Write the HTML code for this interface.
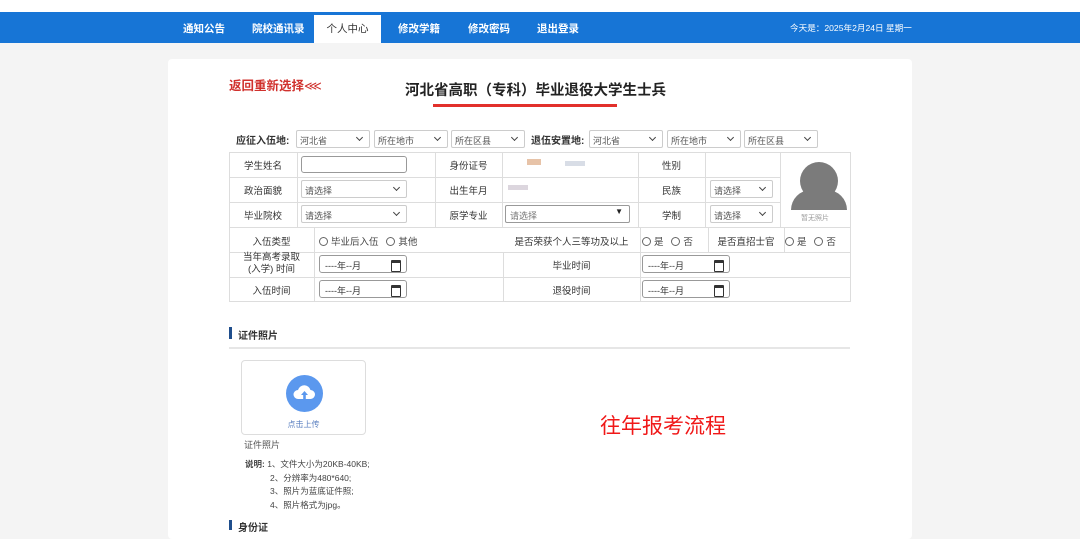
<!DOCTYPE html>
<html><head><meta charset="utf-8">
<style>
*{margin:0;padding:0;box-sizing:border-box}
body{width:1080px;height:527px;overflow:hidden;background:#f4f4f4;font-family:"Liberation Sans","Noto Sans CJK SC",sans-serif;font-size:10px;color:#333;position:relative}
.abs{position:absolute}
.top{left:0;top:0;width:1080px;height:12px;background:#fff}
.nav{left:0;top:12px;width:1080px;height:31px;background:#1775d6}
.nav span{position:absolute;top:9px;color:#fff;font-size:10.5px;font-weight:bold}
.nav .act{top:3px;height:28px;background:#fff;color:#333;font-weight:normal;width:67px;text-align:center;padding-top:6px}
.card{left:168px;top:59px;width:744px;height:480px;background:#fff;border-radius:4px}
.sel{position:absolute;height:18px;border:1px solid #ccc;border-radius:2px;background:#fff;font-size:9px;color:#555;padding:3px 0 0 3px}
.sel:after{content:"";position:absolute;right:7px;top:4px;width:4px;height:4px;border-right:1px solid #444;border-bottom:1px solid #444;transform:rotate(45deg)}
.lab{position:absolute;font-size:10px;font-weight:bold;color:#333}
.h{position:absolute;height:1px;background:#ddd}
.v{position:absolute;width:1px;background:#ddd}
.c{position:absolute;font-size:9.5px;color:#333;text-align:center}
.date{position:absolute;height:18px;border:1px solid #999;border-radius:3px;background:#fff;font-size:9px;padding:3px 0 0 5px;width:88px}
.date:after{content:"";position:absolute;right:5px;top:4px;width:8px;height:8px;border:1.5px solid #333;border-top-width:3px;border-radius:1px}
.radio{display:inline-block;width:9px;height:9px;border:1px solid #666;border-radius:50%;vertical-align:-1px;margin-right:3px}
.r{position:absolute;font-size:9.5px;color:#444}
</style></head><body>
<div class="abs top"></div>
<div class="abs nav">
<span style="left:183px">通知公告</span>
<span style="left:252px">院校通讯录</span>
<span class="act" style="left:314px">个人中心</span>
<span style="left:398px">修改学籍</span>
<span style="left:468px">修改密码</span>
<span style="left:537px">退出登录</span>
<span style="left:790px;font-weight:normal;font-size:8.6px;top:10px">今天是：2025年2月24日 星期一</span>
</div>
<div class="abs card"></div>
<div class="abs" style="left:229px;top:75px;color:#d0312d;font-size:12.5px;font-weight:bold">返回重新选择<span style="font-weight:normal">⋘</span></div>
<div class="abs" style="left:405px;top:79px;font-size:14.5px;font-weight:bold;color:#222">河北省高职（专科）毕业退役大学生士兵</div>
<div class="abs" style="left:433px;top:104px;width:184px;height:3px;background:#e2302b"></div>

<div class="lab" style="left:236px;top:132px">应征入伍地:</div>
<div class="sel" style="left:296px;top:130px;width:74px">河北省</div>
<div class="sel" style="left:374px;top:130px;width:74px">所在地市</div>
<div class="sel" style="left:451px;top:130px;width:74px">所在区县</div>
<div class="lab" style="left:531px;top:132px">退伍安置地:</div>
<div class="sel" style="left:589px;top:130px;width:74px">河北省</div>
<div class="sel" style="left:667px;top:130px;width:74px">所在地市</div>
<div class="sel" style="left:744px;top:130px;width:74px">所在区县</div>

<div class="h" style="left:229px;top:152px;width:621px"></div>
<div class="h" style="left:229px;top:177px;width:551px"></div>
<div class="h" style="left:229px;top:202px;width:551px"></div>
<div class="h" style="left:229px;top:227px;width:621px"></div>
<div class="h" style="left:229px;top:252px;width:621px"></div>
<div class="h" style="left:229px;top:277px;width:621px"></div>
<div class="h" style="left:229px;top:301px;width:621px"></div>
<div class="v" style="left:229px;top:152px;height:150px"></div>
<div class="v" style="left:850px;top:152px;height:150px"></div>
<div class="v" style="left:297px;top:152px;height:75px"></div>
<div class="v" style="left:435px;top:152px;height:75px"></div>
<div class="v" style="left:502px;top:152px;height:75px"></div>
<div class="v" style="left:638px;top:152px;height:75px"></div>
<div class="v" style="left:705px;top:152px;height:75px"></div>
<div class="v" style="left:780px;top:152px;height:75px"></div>
<div class="v" style="left:314px;top:227px;height:75px"></div>
<div class="v" style="left:503px;top:252px;height:50px"></div>
<div class="v" style="left:640px;top:227px;height:75px"></div>
<div class="v" style="left:708px;top:227px;height:25px"></div>
<div class="v" style="left:784px;top:227px;height:25px"></div>

<div class="c" style="left:229px;top:158px;width:68px">学生姓名</div>
<div class="c" style="left:229px;top:183px;width:68px">政治面貌</div>
<div class="c" style="left:229px;top:208px;width:68px">毕业院校</div>
<div class="abs" style="left:301px;top:156px;width:106px;height:17px;border:1px solid #999;border-radius:3px"></div>
<div class="sel" style="left:301px;top:180px;width:106px">请选择</div>
<div class="sel" style="left:301px;top:205px;width:106px">请选择</div>
<div class="c" style="left:435px;top:158px;width:67px">身份证号</div>
<div class="c" style="left:435px;top:183px;width:67px">出生年月</div>
<div class="c" style="left:435px;top:208px;width:67px">原学专业</div>
<div class="abs" style="left:527px;top:159px;width:14px;height:6px;background:#e7c3a8"></div>
<div class="abs" style="left:565px;top:161px;width:20px;height:5px;background:#d8dde6"></div>
<div class="abs" style="left:508px;top:185px;width:20px;height:5px;background:#dcd6de"></div>
<div class="abs" style="left:505px;top:205px;width:125px;height:18px;border:1px solid #999;border-radius:2px;font-size:9px;color:#777;padding:3px 4px">请选择<span style="position:absolute;right:6px;top:1px;font-size:8px;color:#222">▼</span></div>
<div class="c" style="left:638px;top:158px;width:67px">性别</div>
<div class="c" style="left:638px;top:183px;width:67px">民族</div>
<div class="c" style="left:638px;top:208px;width:67px">学制</div>
<div class="sel" style="left:710px;top:180px;width:63px">请选择</div>
<div class="sel" style="left:710px;top:205px;width:63px">请选择</div>
<div class="abs" style="left:800px;top:162px;width:38px;height:38px;border-radius:50%;background:#7b7b7b"></div>
<div class="abs" style="left:791px;top:190px;width:56px;height:20px;border-radius:26px 26px 0 0;background:#7b7b7b"></div>
<div class="abs" style="left:780px;top:213px;width:70px;text-align:center;font-size:7px;color:#999">暂无照片</div>

<div class="c" style="left:229px;top:234px;width:85px">入伍类型</div>
<div class="r" style="left:319px;top:234px"><span class="radio"></span>毕业后入伍 &nbsp;&nbsp;<span class="radio"></span>其他</div>
<div class="c" style="left:503px;top:234px;width:137px">是否荣获个人三等功及以上</div>
<div class="r" style="left:642px;top:234px"><span class="radio"></span>是 &nbsp;&nbsp;<span class="radio"></span>否</div>
<div class="c" style="left:708px;top:234px;width:76px">是否直招士官</div>
<div class="r" style="left:785px;top:234px"><span class="radio"></span>是 &nbsp;&nbsp;<span class="radio"></span>否</div>

<div class="c" style="left:229px;top:252px;width:85px;line-height:12px">当年高考录取<br>(入学) 时间</div>
<div class="date" style="left:319px;top:255px">----年--月</div>
<div class="c" style="left:503px;top:258px;width:137px">毕业时间</div>
<div class="date" style="left:642px;top:255px">----年--月</div>
<div class="c" style="left:229px;top:283px;width:85px">入伍时间</div>
<div class="date" style="left:319px;top:280px">----年--月</div>
<div class="c" style="left:503px;top:283px;width:137px">退役时间</div>
<div class="date" style="left:642px;top:280px">----年--月</div>

<div class="abs" style="left:229px;top:327px;width:3px;height:12px;background:#1f4e8c"></div>
<div class="lab" style="left:238px;top:327px">证件照片</div>
<div class="h" style="left:229px;top:347px;width:621px;background:#e6e6e6;height:2px"></div>
<div class="abs" style="left:241px;top:360px;width:125px;height:75px;border:1px solid #ddd;border-radius:4px"></div>
<div class="abs" style="left:286px;top:375px;width:37px;height:37px;border-radius:50%;background:#5b98ee"></div>
<svg class="abs" style="left:292px;top:383px" width="25" height="20" viewBox="0 0 25 20"><path d="M6 16a4.5 4.5 0 0 1 0-9 6.5 6.5 0 0 1 12.5 0 4.5 4.5 0 0 1 0 9z" fill="#fff"/><path d="M12.5 8l-3.5 4h2.2v4h2.6v-4h2.2z" fill="#5b98ee"/></svg>
<div class="abs" style="left:241px;top:419px;width:125px;text-align:center;font-size:8px;color:#5a7fc0">点击上传</div>
<div class="abs" style="left:244px;top:438px;font-size:9px;color:#555">证件照片</div>
<div class="abs" style="left:245px;top:458px;font-size:8.5px;color:#444;line-height:13.7px"><b>说明:</b> 1、文件大小为20KB-40KB;<br><span style="padding-left:25px">2、分辨率为480*640;</span><br><span style="padding-left:25px">3、照片为蓝底证件照;</span><br><span style="padding-left:25px">4、照片格式为jpg。</span></div>
<div class="abs" style="left:229px;top:520px;width:3px;height:10px;background:#1f4e8c"></div>
<div class="lab" style="left:238px;top:519px">身份证</div>
<div class="abs" style="left:600px;top:410px;font-size:21px;color:#f01818">往年报考流程</div>
</body></html>
